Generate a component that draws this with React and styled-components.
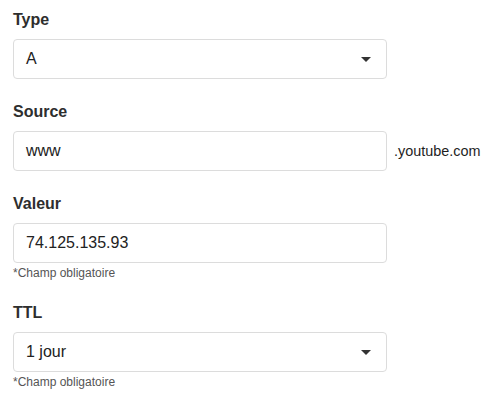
import React from 'react'
import styled, { createGlobalStyle } from 'styled-components'

const GlobalStyle = createGlobalStyle`
  body {
    margin: 0;
    background: #fff;
    font-family: "Liberation Sans", Arial, sans-serif;
    color: #222;
  }
`

const Form = styled.div`
  padding: 10px 13px;
`

const Field = styled.div`
  margin-bottom: 23px;
`

const Label = styled.div`
  font-size: 16px;
  font-weight: 700;
  line-height: 20px;
  color: #2e2e2e;
  margin-bottom: 9px;
`

const Row = styled.div`
  display: flex;
  align-items: center;
  gap: 7px;
`

const Box = styled.div`
  box-sizing: border-box;
  width: 374px;
  height: 40px;
  border: 1px solid #dcdcdc;
  border-radius: 4px;
  padding: 0 15px 0 12px;
  display: flex;
  align-items: center;
  justify-content: space-between;
  font-size: 16px;
  color: #222;
`

const Caret = styled.span`
  width: 0;
  height: 0;
  border-left: 5px solid transparent;
  border-right: 5px solid transparent;
  border-top: 5px solid #333;
`

const Suffix = styled.span`
  font-size: 14.4px;
  color: #1e1e1e;
`

const Hint = styled.div`
  font-size: 12px;
  color: #555;
  margin-top: 4px;
  line-height: 13px;
`

const fields = [
  { label: 'Type', value: 'A', select: true },
  { label: 'Source', value: 'www', suffix: '.youtube.com' },
  { label: 'Valeur', value: '74.125.135.93', hint: true },
  { label: 'TTL', value: '1 jour', select: true, hint: true },
]

export default function App() {
  return (
    <Form>
      <GlobalStyle />
      {fields.map((f) => (
        <Field key={f.label}>
          <Label>{f.label}</Label>
          <Row>
            <Box>
              <span>{f.value}</span>
              {f.select && <Caret />}
            </Box>
            {f.suffix && <Suffix>{f.suffix}</Suffix>}
          </Row>
          {f.hint && <Hint>*Champ obligatoire</Hint>}
        </Field>
      ))}
    </Form>
  )
}
